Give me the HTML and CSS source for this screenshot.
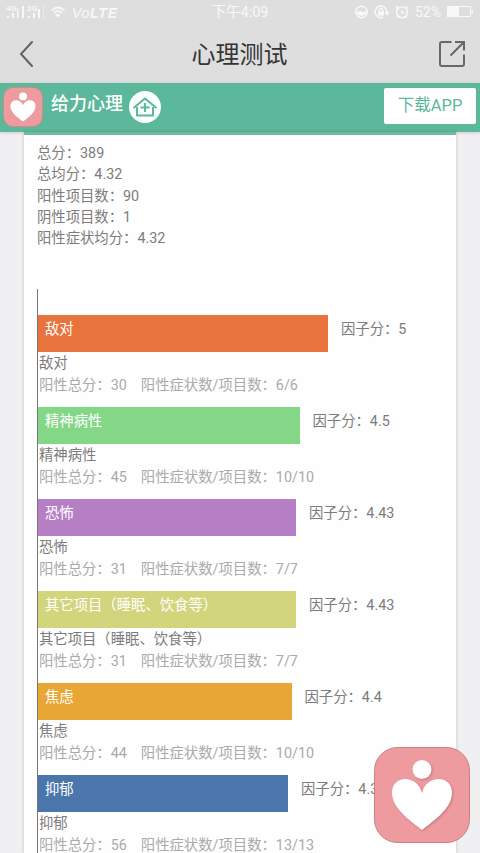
FILE: index.html
```
<!DOCTYPE html>
<html lang="zh-CN">
<head>
  <meta charset="UTF-8">
  <meta name="viewport" content="width=device-width, initial-scale=1">
  <title>心理测试</title>
  <link rel="stylesheet" href="styles.css">
</head>
<body>

  <div class="top">
    <div class="status-bar">
      <svg class="signal" width="124" height="24" viewBox="0 0 124 24">
        <g fill="#f8f8f8">
          <path d="M7 16h2v2H7zM12 13h2v5h-2zM17 9h1.500v9H17zM22 6h2v12h-2zM28 16h2v2h-2zM33 13h2v5h-2zM38 9h2v9h-2z"/>
          <path d="M43 6h1v12h-1z" opacity=".5"/>
        </g>
        <text class="net" x="6" y="11">4G</text>
        <text class="net" x="27" y="11">2G</text>
        <g fill="none" stroke="#f8f8f8" stroke-width="1.7">
          <path d="M51.500 10.500Q58 4.500 64.500 10.500M53.700 13Q58 9 62.300 13"/>
          <path d="M58 17.500l-2.700-2.700q2.700-2.300 5.400 0z" fill="#f8f8f8" stroke="none"/>
        </g>
        <text class="volte" x="72" y="18" textLength="45"><tspan class="thin">Vo</tspan>LTE</text>
      </svg>
      <span class="clock">下午4:09</span>
      <div class="status-right">
        <svg width="56" height="16" viewBox="0 0 56 16" fill="none" stroke="#f8f8f8" stroke-width="1.500">
          <circle cx="7.500" cy="8" r="5.700"/>
          <path d="M3 8.500l3-1 3 1 3-1a4.700 4.700 0 0 1-9 1z" fill="#f8f8f8" stroke-width="1"/>
          <path d="M32.500 9.500A5.800 5.800 0 1 0 29 13.300M31 9h4.500M33.200 7v4.500"/>
          <path d="M24 7.500h6v4h-6z" fill="#f8f8f8" stroke="none"/>
          <path d="M25.300 8V6a1.700 1.700 0 0 1 3.400 0v2" stroke-width="1.300"/>
          <circle cx="48" cy="8.300" r="5.400"/>
          <path d="M48 5.500v3.300h2.500M41.500 4.500L44 2.300M54.500 4.500L52 2.300M44.500 12.500l-1.300 1.500M51.500 12.500l1.300 1.500"/>
        </svg>
        <span class="percent">52%</span>
        <svg width="28" height="14" viewBox="0 0 28 14">
          <path d="M1.500 1.500h23v10h-23z" fill="none" stroke="#f8f8f8"/>
          <path d="M1 1h12v11H1zM25.500 4.500h1.500v4h-1.500z" fill="#f8f8f8"/>
        </svg>
      </div>
    </div>

    <div class="title-bar">
      <svg class="back" width="16" height="28" viewBox="0 0 16 28">
        <path d="M13 2L2 14l11 12" fill="none" stroke="#626262" stroke-width="2" stroke-linecap="round"/>
      </svg>
      <h1>心理测试</h1>
      <svg class="share" width="28" height="28" viewBox="0 0 28 28" fill="none" stroke="#686868" stroke-width="2">
        <path d="M13.500 2H4Q2 2 2 4v20q0 2 2 2h20q2 0 2-2v-9.500"/>
        <path d="M17 2h9v8.500M26 2L12.500 15.500"/>
      </svg>
    </div>
  </div>

  <div class="app-bar">
    <svg class="logo" width="40" height="40" viewBox="0 0 96 96">
      <rect x="1" y="1" width="94" height="94" rx="24" fill="#ee9ba0" stroke="#d58388" stroke-width="2"/>
      <g fill="#fff">
        <circle cx="48" cy="22.500" r="9.500"/>
        <path d="M48 83C38 75 18 62 18 46c0-19 25-18 30-2 5-16 30-17 30 2 0 16-20 29-30 37z"/>
      </g>
    </svg>
    <span class="brand">给力心理</span>
    <svg class="home" width="32" height="32" viewBox="0 0 32 32">
      <circle cx="16" cy="16" r="16" fill="#fbfffd"/>
      <g fill="none" stroke="#5bb89b" stroke-width="2">
        <path d="M4.500 17L16 7.500 27.500 17M8 16v8.500h16V16" stroke-linejoin="round"/>
        <path d="M16 12v9M11.500 16.500h9"/>
      </g>
    </svg>
    <a class="download" href="#">下载APP</a>
  </div>

  <div class="card">
    <div class="summary">
      <p>总分：389</p>
      <p>总均分：4.32</p>
      <p>阳性项目数：90</p>
      <p>阴性项目数：1</p>
      <p>阳性症状均分：4.32</p>
    </div>

    <div class="chart">
      <div class="item">
        <div class="row"><div class="bar orange" style="width: 290px">敌对</div><span>因子分：5</span></div>
        <p>敌对</p>
        <p class="detail"><span>阳性总分：30</span><span>阳性症状数/项目数：6/6</span></p>
      </div>
      <div class="item">
        <div class="row"><div class="bar green" style="width: 261.500px">精神病性</div><span>因子分：4.5</span></div>
        <p>精神病性</p>
        <p class="detail"><span>阳性总分：45</span><span>阳性症状数/项目数：10/10</span></p>
      </div>
      <div class="item">
        <div class="row"><div class="bar purple" style="width: 258px">恐怖</div><span>因子分：4.43</span></div>
        <p>恐怖</p>
        <p class="detail"><span>阳性总分：31</span><span>阳性症状数/项目数：7/7</span></p>
      </div>
      <div class="item">
        <div class="row"><div class="bar lime" style="width: 258px">其它项目（睡眠、饮食等）</div><span>因子分：4.43</span></div>
        <p>其它项目（睡眠、饮食等）</p>
        <p class="detail"><span>阳性总分：31</span><span>阳性症状数/项目数：7/7</span></p>
      </div>
      <div class="item">
        <div class="row"><div class="bar amber" style="width: 253.500px">焦虑</div><span>因子分：4.4</span></div>
        <p>焦虑</p>
        <p class="detail"><span>阳性总分：44</span><span>阳性症状数/项目数：10/10</span></p>
      </div>
      <div class="item">
        <div class="row"><div class="bar blue" style="width: 250px">抑郁</div><span>因子分：4.31</span></div>
        <p>抑郁</p>
        <p class="detail"><span>阳性总分：56</span><span>阳性症状数/项目数：13/13</span></p>
      </div>
    </div>
  </div>

  <svg class="float-logo" width="96" height="96" viewBox="0 0 96 96">
    <rect x=".500" y=".500" width="95" height="95" rx="23" fill="#ee9ba0" stroke="#ca8085"/>
    <g class="heart" fill="#fff">
      <circle cx="48" cy="22.500" r="9.500"/>
      <path d="M48 83C38 75 18 62 18 46c0-19 26-18 30 0 4-18 30-19 30 0 0 16-20 29-30 37z"/>
    </g>
  </svg>

</body>
</html>
```
FILE: styles.css
```
* {
  box-sizing: border-box;
}

body {
  margin: 0;
  height: 853px;
  overflow: hidden;
  position: relative;
  display: flex;
  flex-direction: column;
  background-color: #f0f0f2;
  color: #7c7c7c;
  font-family: Roboto, "Noto Sans CJK SC", sans-serif;
  font-size: 14.35px;
  line-height: 21.33px;
}

p, h1 {
  margin: 0;
}

.top {
  height: 83px;
  flex: none;
  background-color: #dedede;
}

/* status bar */
.status-bar {
  display: grid;
  grid-template-columns: 1fr auto 1fr;
  align-items: center;
  height: 24px;
  color: #f8f8f8;
}

.net {
  font: bold 8px "Liberation Sans", sans-serif;
  fill: #f8f8f8;
}

.volte {
  font: italic bold 14px "Liberation Sans", sans-serif;
  fill: #f8f8f8;
}

.thin {
  font-weight: normal;
}

.clock {
  padding-top: 2px;
  font-size: 14.5px;
}

.status-right {
  display: flex;
  align-items: center;
  justify-content: flex-end;
  gap: 5px;
  padding-right: 6px;
}

.percent {
  padding-top: 2px;
  font-size: 14px;
}

/* title */
.title-bar {
  display: flex;
  align-items: center;
  justify-content: space-between;
  height: 59px;
  padding: 0 14px 0 19px;
}

.title-bar h1 {
  padding: 2px 0 0 6px;
  font-size: 24px;
  font-weight: 400;
  line-height: 36px;
  color: #353535;
}

.app-bar {
  display: flex;
  align-items: center;
  flex: none;
  height: 49px;
  padding: 0 4px 2px 3px;
  background-color: #5bb89b;
  box-shadow: 0 1px 3px rgba(0, 0, 0, 0.15);
}

.brand {
  margin: 0 6px 5px 8px;
  font-size: 18px;
  font-weight: 500;
  color: #fff;
}

.download {
  width: 92px;
  height: 36px;
  margin-left: auto;
  margin-bottom: 1px;
  border-radius: 2px;
  background-color: #fff;
  color: #5bb89b;
  font-size: 16.5px;
  line-height: 36px;
  text-align: center;
  text-decoration: none;
}

/* result card */
.card {
  flex: 1;
  min-height: 0;
  margin: 0 24px;
  padding: 8px 13px 0;
  border-top: 3px solid #70b99f;
  background-color: #fefefe;
  box-shadow: 0 0 3px rgba(0, 0, 0, 0.2);
}

.chart {
  margin-top: 39px;
  padding-top: 26.5px;
  border-left: 1px solid #777;
}

.item {
  height: 92px;
}

.item p {
  padding-left: 1px;
}

.row {
  display: flex;
  gap: 13px;
  height: 37.3px;
  margin-bottom: 1px;
  line-height: 29px;
}

.bar {
  padding-left: 7px;
  color: #fff;
}

.detail {
  display: flex;
  gap: 14px;
  color: #aaa;
}

.orange { background-color: #e9733d; }
.green { background-color: #85d788; }
.purple { background-color: #b67fc5; }
.lime { background-color: #d3d57d; }
.amber { background-color: #e8a735; }
.blue { background-color: #4a76ac; }

/* floating button over the page */
.float-logo {
  position: absolute;
  right: 10px;
  bottom: 10px;
}

.heart {
  filter: drop-shadow(1px 1px 1px rgba(140, 60, 65, 0.4));
}
```
